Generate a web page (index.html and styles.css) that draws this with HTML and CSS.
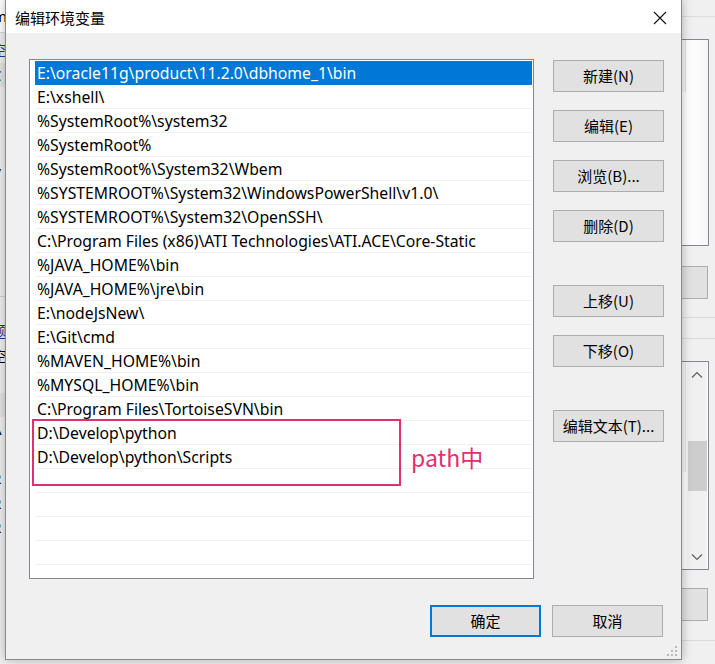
FILE: index.html
```html
<!DOCTYPE html>
<html lang="zh-CN">
<head>
<meta charset="utf-8">
<title>编辑环境变量</title>
<link rel="stylesheet" href="styles.css">
</head>
<body>
<div class="desk">
  <div class="bgwin bg-left">
    <div class="bl-top"><span>m</span></div>
    <div class="bl-rows">
      <div class="bl-row blue">空</div>
      <div class="bl-row hl">C</div>
      <div class="bl-row">r</div>
      <div class="bl-row">a</div>
      <div class="bl-row">E</div>
      <div class="bl-row">V</div>
    </div>
    <div class="bl-sep"></div>
    <div class="bl-rows second">
      <div class="bl-row blue">题</div>
      <div class="bl-row">空</div>
      <div class="bl-row">S</div>
      <div class="bl-row hl">a</div>
      <div class="bl-row">A</div>
      <div class="bl-row">E</div>
      <div class="bl-row">R</div>
      <div class="bl-row">R</div>
      <div class="bl-row">R</div>
    </div>
  </div>

  <div class="bgwin bg-right">
    <div class="br-top"></div>
    <div class="br-list first"><div class="br-inner"></div></div>
    <div class="br-btn"></div>
    <div class="br-line a"></div>
    <div class="br-line b"></div>
    <div class="br-list second">
      <div class="br-inner"></div>
      <div class="br-scroll">
        <svg class="chev" width="12" height="8" viewBox="0 0 12 8"><path d="M1 6.5 L6 1.5 L11 6.5" fill="none" stroke="#606060" stroke-width="1.2"/></svg>
        <div class="thumb"></div>
        <svg class="chev down" width="12" height="8" viewBox="0 0 12 8"><path d="M1 1.5 L6 6.5 L11 1.5" fill="none" stroke="#606060" stroke-width="1.2"/></svg>
      </div>
    </div>
    <div class="br-btn lower"></div>
    <div class="br-line c"></div>
  </div>

  <div class="dialog">
    <div class="titlebar">
      <span class="title">编辑环境变量</span>
      <svg class="close" width="14" height="14" viewBox="0 0 14 14"><path d="M1 1 L13 13 M13 1 L1 13" stroke="#111" stroke-width="1.1" fill="none"/></svg>
    </div>
    <div class="body">
      <div class="main">
        <div class="list">
          <div class="row sel">E:\oracle11g\product\11.2.0\dbhome_1\bin</div>
          <div class="row">E:\xshell\</div>
          <div class="row">%SystemRoot%\system32</div>
          <div class="row">%SystemRoot%</div>
          <div class="row">%SystemRoot%\System32\Wbem</div>
          <div class="row">%SYSTEMROOT%\System32\WindowsPowerShell\v1.0\</div>
          <div class="row">%SYSTEMROOT%\System32\OpenSSH\</div>
          <div class="row">C:\Program Files (x86)\ATI Technologies\ATI.ACE\Core-Static</div>
          <div class="row">%JAVA_HOME%\bin</div>
          <div class="row">%JAVA_HOME%\jre\bin</div>
          <div class="row">E:\nodeJsNew\</div>
          <div class="row">E:\Git\cmd</div>
          <div class="row">%MAVEN_HOME%\bin</div>
          <div class="row">%MYSQL_HOME%\bin</div>
          <div class="row">C:\Program Files\TortoiseSVN\bin</div>
          <div class="row">D:\Develop\python</div>
          <div class="row">D:\Develop\python\Scripts</div>
          <div class="row"></div>
          <div class="row"></div>
          <div class="row"></div>
          <div class="row"></div>
          <div class="row"></div>
          <div class="row"></div>
        </div>
        <div class="side">
          <button class="btn">新建(N)</button>
          <button class="btn">编辑(E)</button>
          <button class="btn">浏览(B)...</button>
          <button class="btn">删除(D)</button>
          <button class="btn spaced">上移(U)</button>
          <button class="btn">下移(O)</button>
          <button class="btn spaced">编辑文本(T)...</button>
        </div>
      </div>
      <div class="footer">
        <button class="btn primary">确定</button>
        <button class="btn">取消</button>
      </div>
    </div>
    <div class="annot-box"></div>
    <span class="annot-text">path中</span>
    <svg class="grip" width="12" height="12" viewBox="0 0 12 12">
      <rect x="8" y="0" width="2" height="2" fill="#b9b9b9"/>
      <rect x="4" y="4" width="2" height="2" fill="#b9b9b9"/>
      <rect x="8" y="4" width="2" height="2" fill="#b9b9b9"/>
      <rect x="0" y="8" width="2" height="2" fill="#b9b9b9"/>
      <rect x="4" y="8" width="2" height="2" fill="#b9b9b9"/>
      <rect x="8" y="8" width="2" height="2" fill="#b9b9b9"/>
    </svg>
  </div>
</div>
</body>
</html>
```
FILE: styles.css
```css
* { box-sizing: border-box; }
html, body { margin: 0; padding: 0; }
body {
  width: 715px;
  height: 664px;
  overflow: hidden;
  background: #f0f0f0;
  font-family: "Noto Sans", "Noto Sans CJK SC", sans-serif;
  font-size: 15px;
  color: #000;
}
.desk {
  position: relative;
  width: 715px;
  height: 664px;
  overflow: hidden;
}

/* background windows */
.bgwin { position: absolute; top: 0; overflow: hidden; }
.bg-left {
  left: 0;
  width: 8px;
  height: 664px;
  background: #f0f0f0;
}
.bl-top {
  height: 33px;
  background: #fff;
  border-bottom: 1px solid #d9d9d9;
  padding-top: 6px;
  margin-left: -7px;
}
.bl-rows { margin-left: -8px; padding-top: 5px; }
.bl-row { height: 24.5px; line-height: 24px; }
.bl-row.blue { color: #1a3a8a; }
.bl-row.hl { background: #e4e4e4; }
.bl-sep {
  height: 1px;
  background: #d0d0d0;
  margin-top: 111px;
}
.bl-rows.second { padding-top: 22px; }

.bg-right {
  left: 660px;
  width: 55px;
  height: 664px;
  background: #f0f0f0;
}
.br-top {
  height: 17px;
  border-bottom: 1px solid #dcdcdc;
}
.br-list {
  margin-top: 22px;
  width: 49px;
  height: 207px;
  border: 1px solid #828790;
  background: linear-gradient(90deg, #fff 60%, #f6f6f6);
  display: flex;
}
.br-inner {
  width: 25px;
  border-right: 1px solid #e2e2e2;
  height: 52px;
  background: #f7f7f7;
}
.br-btn {
  margin-top: 20px;
  width: 48px;
  height: 33px;
  background: #e1e1e1;
  border: 1px solid #adadad;
}
.br-btn.lower { margin-top: 18px; }
.br-line { height: 1px; background: #dadada; }
.br-line.a { margin-top: 18px; }
.br-line.b { margin-top: 20px; }
.br-line.c { margin-top: 19px; }
.br-list.second {
  margin-top: 22px;
  height: 209px;
  background: #fff;
}
.br-list.second .br-inner { height: 110px; }
.br-scroll {
  margin-left: 1px;
  width: 20px;
  height: 100%;
  background: #f0f0f0;
  display: flex;
  flex-direction: column;
  align-items: center;
  padding-top: 9px;
}
.thumb {
  margin-top: 62px;
  width: 19px;
  height: 50px;
  background: #cdcdcd;
}
.chev.down { margin-top: auto; margin-bottom: 8px; }

/* dialog */
.dialog {
  position: absolute;
  left: 5px;
  top: -1px;
  width: 677px;
  height: 661px;
  border: 1px solid #8a8a8a;
  background: #f0f0f0;
  box-shadow: 0 0 10px rgba(0,0,0,0.28);
  display: flex;
  flex-direction: column;
}
.titlebar {
  height: 33px;
  background: #fff;
  display: flex;
  align-items: center;
  padding-left: 9px;
  padding-right: 14px;
  flex: none;
}
.title {
  font-family: "Noto Sans CJK SC", sans-serif;
  font-size: 15px;
  line-height: 20px;
  margin-top: 2px;
}
.close { margin-left: auto; margin-top: 2px; }

.body {
  flex: 1;
  padding: 26px 18px 0 23px;
  display: flex;
  flex-direction: column;
}
.main {
  display: grid;
  grid-template-columns: 505px 111px;
  column-gap: 19px;
}
.list {
  height: 520px;
  border: 1px solid #828790;
  background: #fff;
  padding: 1px 1px 0 5px;
  overflow: hidden;
}
.row {
  height: 24px;
  line-height: 24px;
  font-size: 15.75px;
  border-bottom: 1px solid #f0f0f0;
  padding-left: 2px;
  white-space: nowrap;
  overflow: hidden;
}
.row.sel {
  background: #0078d7;
  color: #fff;
  border-bottom-color: #0078d7;
}
.side {
  display: flex;
  flex-direction: column;
  gap: 18px;
  padding-top: 1px;
}
.btn {
  width: 111px;
  height: 32px;
  background: #e1e1e1;
  border: 1px solid #adadad;
  font-family: "Noto Sans CJK SC", sans-serif;
  font-size: 15px;
  color: #000;
  padding: 0;
  margin: 0;
  line-height: 28px;
}
.btn.spaced { margin-top: 25px; }
.footer {
  display: flex;
  justify-content: flex-end;
  gap: 11px;
  margin-top: 26px;
}
.btn.primary { border: 2px solid #0078d7; }

.annot-box {
  position: absolute;
  left: 26px;
  top: 419px;
  width: 369px;
  height: 67px;
  border: 2px solid #df3070;
}
.annot-text {
  position: absolute;
  left: 405px;
  top: 443px;
  font-family: "Noto Sans CJK SC", sans-serif;
  font-size: 23px;
  line-height: 28px;
  color: #df3070;
}
.grip {
  position: absolute;
  right: 2px;
  bottom: 1px;
}
```
